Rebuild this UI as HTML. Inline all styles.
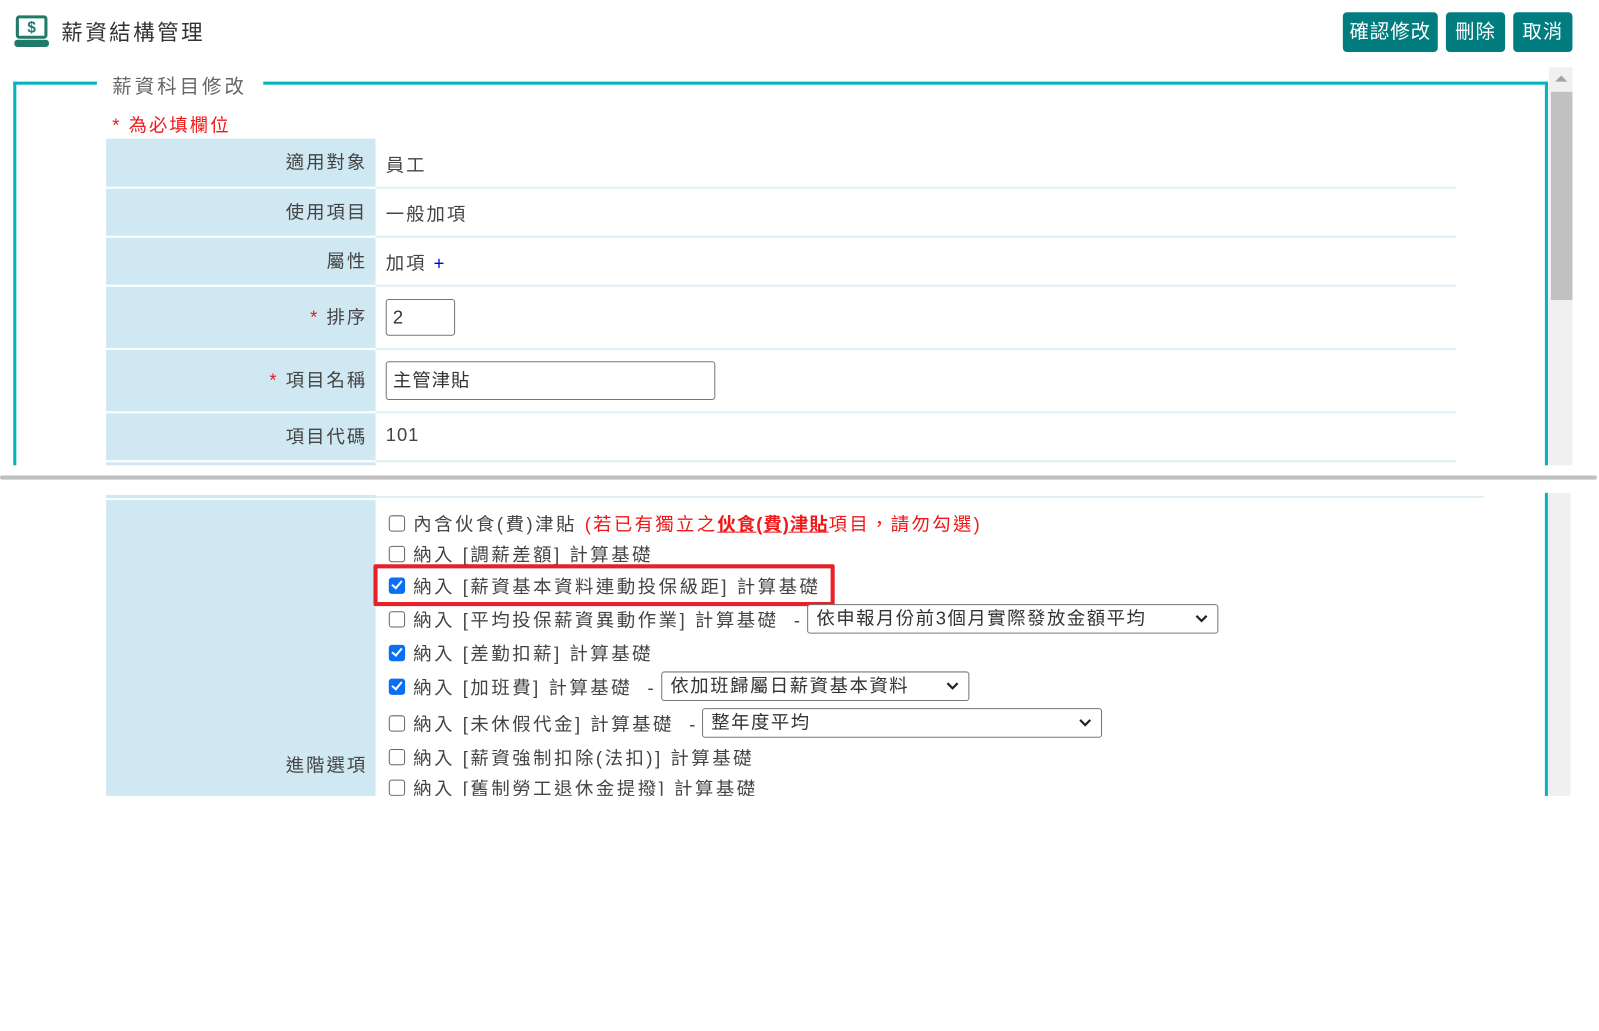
<!DOCTYPE html>
<html><head><meta charset="utf-8"><style>
html,body{margin:0;padding:0;background:#fff;overflow:hidden;width:1599px;height:840px}
#w{position:absolute;left:0;top:0;width:1567px;height:823px;transform:scale(1.0204);transform-origin:0 0;font-family:"Liberation Sans","Noto Sans CJK TC",sans-serif;color:#333}
.a{position:absolute}
.btn{position:absolute;top:12px;height:39px;background:#017d80;color:#fff;border-radius:4px;font-size:19px;line-height:39px;text-align:center;letter-spacing:1px}
.lab{position:absolute;left:104px;width:264px;background:#d0e8f2;text-align:right;font-size:18px;color:#444;box-sizing:border-box;padding-right:8px;letter-spacing:2px}
.val{position:absolute;left:378px;font-size:18px;color:#444;letter-spacing:2px}
.sep{position:absolute;left:368px;width:1059px;height:2px;background:#e2eef5}
.inp{position:absolute;border:1px solid #767676;border-radius:3px;box-sizing:border-box;font-size:18px;padding-left:6px;color:#333;letter-spacing:1px}
.cb{position:absolute;left:381px;width:16px;height:16px;border:1.5px solid #666;border-radius:3px;box-sizing:border-box;background:#fff}
.cb.on{background:#0b6ff5;border-color:#0b6ff5}
.cb.on::after{content:"";position:absolute;left:4px;top:0px;width:4px;height:8px;border:solid #fff;border-width:0 2.5px 2.5px 0;transform:rotate(40deg)}
.t{position:absolute;left:405px;font-size:18px;color:#444;white-space:nowrap;letter-spacing:2.5px}
.sel{position:absolute;border:1px solid #767676;border-radius:3px;box-sizing:border-box;font-size:18px;padding-left:8px;color:#333;background:#fff;white-space:nowrap;letter-spacing:1.5px}
.sel svg{position:absolute;right:9px;top:50%;margin-top:-5px}
</style></head><body><div id="w">
<svg class="a" style="left:14px;top:15px" width="34" height="31" viewBox="0 0 34 31"><rect x="3" y="1.5" width="28" height="20" rx="2" fill="none" stroke="#1f7a68" stroke-width="3"/><rect x="0" y="24" width="34" height="7" rx="3" fill="#1f7a68"/><text x="17" y="17" font-size="15" font-weight="bold" text-anchor="middle" fill="#1f7a68" font-family="Liberation Sans">$</text></svg>
<div class="a" style="left:60px;top:16px;font-size:21px;color:#333;letter-spacing:2.5px">薪資結構管理</div>
<div class="btn" style="left:1316px;width:93px">確認修改</div>
<div class="btn" style="left:1417px;width:58px">刪除</div>
<div class="btn" style="left:1483px;width:58px">取消</div>

<div class="a" style="left:13px;top:80px;width:3px;height:376px;background:#00b5bd"></div>
<div class="a" style="left:13px;top:80px;width:82px;height:3px;background:#00b5bd"></div>
<div class="a" style="left:258px;top:80px;width:1259px;height:3px;background:#00b5bd"></div>
<div class="a" style="left:1514px;top:80px;width:3px;height:376px;background:#00b5bd"></div>
<div class="a" style="left:110px;top:70px;font-size:19px;color:#666;letter-spacing:3px">薪資科目修改</div>
<div class="a" style="left:1518px;top:66px;width:23px;height:390px;background:#f0f0f0"></div>
<div class="a" style="left:1524px;top:74px;width:0;height:0;border-left:6px solid transparent;border-right:6px solid transparent;border-bottom:6px solid #a3a3a3"></div>
<div class="a" style="left:1520px;top:90px;width:21px;height:204px;background:#c1c1c1"></div>
<div class="a" style="left:110px;top:109px;font-size:18px;color:#f01818;letter-spacing:2px">* 為必填欄位</div>

<div class="lab" style="top:136px;height:47px;line-height:47px">適用對象</div><div class="val" style="top:148px">員工</div>
<div class="sep" style="top:183px"></div>
<div class="lab" style="top:185px;height:46px;line-height:46px">使用項目</div><div class="val" style="top:196px">一般加項</div>
<div class="sep" style="top:231px"></div>
<div class="lab" style="top:233px;height:46px;line-height:46px">屬性</div><div class="val" style="top:244px">加項 <span style="color:#0000ee">+</span></div>
<div class="sep" style="top:279px"></div>
<div class="lab" style="top:281px;height:60px;line-height:60px"><span style="color:#f01818">*</span> 排序</div>
<div class="inp" style="left:378px;top:293px;width:68px;height:36px;line-height:34px">2</div>
<div class="sep" style="top:341px"></div>
<div class="lab" style="top:343px;height:60px;line-height:60px"><span style="color:#f01818">*</span> 項目名稱</div>
<div class="inp" style="left:378px;top:354px;width:323px;height:38px;line-height:36px">主管津貼</div>
<div class="sep" style="top:403px"></div>
<div class="lab" style="top:405px;height:46px;line-height:46px">項目代碼</div><div class="val" style="top:416px;letter-spacing:1px">101</div>
<div class="sep" style="top:451px"></div>
<div class="lab" style="top:453px;height:3px"></div>

<div class="a" style="left:0;top:466px;width:1565px;height:4px;background:#c0c0c0;border-radius:2px"></div>

<div class="lab" style="top:485px;height:3px"></div>
<div class="lab" style="top:490px;height:290px;line-height:520px">進階選項</div>
<div class="sep" style="top:486px;width:1086px"></div>
<div class="a" style="left:1514px;top:483px;width:3px;height:297px;background:#00b5bd"></div>
<div class="a" style="left:1517px;top:483px;width:22px;height:297px;background:#f0f0f0"></div>

<div class="cb" style="top:505px"></div><div class="t" style="top:500px">內含伙食(費)津貼 <span style="color:#f01818;letter-spacing:2.3px">(若已有獨立之<b style="text-decoration:underline;letter-spacing:1px">伙食(費)津貼</b>項目，請勿勾選)</span></div>
<div class="cb" style="top:535px"></div><div class="t" style="top:530px">納入 [調薪差額] 計算基礎</div>
<div class="a" style="left:366px;top:553px;width:452px;height:41px;border:4px solid #e8202a;box-sizing:border-box;border-radius:2px"></div>
<div class="cb on" style="top:566px"></div><div class="t" style="top:561px">納入 [薪資基本資料連動投保級距] 計算基礎</div>
<div class="cb" style="top:599px"></div><div class="t" style="top:594px">納入 [平均投保薪資異動作業] 計算基礎 &nbsp;-</div>
<div class="sel" style="left:791px;top:592px;width:403px;height:29px;line-height:27px">依申報月份前3個月實際發放金額平均<svg width="13" height="9" viewBox="0 0 13 9"><path d="M1.5 1.5L6.5 6.5L11.5 1.5" fill="none" stroke="#222" stroke-width="2.2"/></svg></div>
<div class="cb on" style="top:632px"></div><div class="t" style="top:627px">納入 [差勤扣薪] 計算基礎</div>
<div class="cb on" style="top:665px"></div><div class="t" style="top:660px">納入 [加班費] 計算基礎 &nbsp;-</div>
<div class="sel" style="left:648px;top:658px;width:302px;height:29px;line-height:27px">依加班歸屬日薪資基本資料<svg width="13" height="9" viewBox="0 0 13 9"><path d="M1.5 1.5L6.5 6.5L11.5 1.5" fill="none" stroke="#222" stroke-width="2.2"/></svg></div>
<div class="cb" style="top:701px"></div><div class="t" style="top:696px">納入 [未休假代金] 計算基礎 &nbsp;-</div>
<div class="sel" style="left:688px;top:694px;width:392px;height:29px;line-height:27px">整年度平均<svg width="13" height="9" viewBox="0 0 13 9"><path d="M1.5 1.5L6.5 6.5L11.5 1.5" fill="none" stroke="#222" stroke-width="2.2"/></svg></div>
<div class="cb" style="top:734px"></div><div class="t" style="top:729px">納入 [薪資強制扣除(法扣)] 計算基礎</div>
<div class="a" style="left:370px;top:760px;width:500px;height:20px;overflow:hidden"><div class="cb" style="left:11px;top:4px"></div><div class="t" style="left:35px;top:-1px">納入 [舊制勞工退休金提撥] 計算基礎</div></div>
</div></body></html>
